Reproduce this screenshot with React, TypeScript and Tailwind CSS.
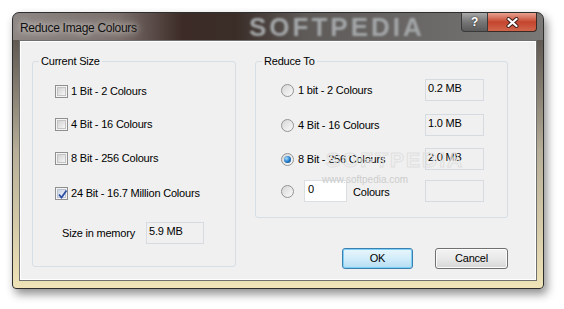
import type { ReactNode } from "react";

const sizes = [
  { label: "1 Bit - 2 Colours", checked: false, gap: "mt-0" },
  { label: "4 Bit - 16 Colours", checked: false, gap: "mt-[11px]" },
  { label: "8 Bit - 256 Colours", checked: false, gap: "mt-[12px]" },
  { label: "24 Bit - 16.7 Million Colours", checked: true, gap: "mt-[13px]" },
];

const targets = [
  { label: "1 bit - 2 Colours", size: "0.2 MB", selected: false, gap: "mt-0" },
  { label: "4 Bit - 16 Colours", size: "1.0 MB", selected: false, gap: "mt-[13px]" },
  { label: "8 Bit - 256 Colours", size: "2.0 MB", selected: true, gap: "mt-[12px]" },
];

function CheckBox({ checked }: { checked: boolean }) {
  return (
    <span className="flex h-[13px] w-[13px] shrink-0 items-center justify-center border border-[#8f8f8f] bg-[#f4f4f4]">
      <span
        className={`relative flex h-[9px] w-[9px] items-center justify-center border ${checked ? "border-[#b9c3d3] bg-gradient-to-br from-[#c9d3e3] to-[#f1f4f9]" : "border-[#c4c4c4] bg-gradient-to-br from-[#d2d2d2] to-[#f6f6f6]"}`}
      >
        {checked && (
          <svg width="11" height="11" viewBox="0 0 11 11" className="absolute -left-[1px] -top-[1px]">
            <path d="M2 5.5 L4.5 8.5 L9.5 1.5" fill="none" stroke="#2c4fa3" strokeWidth="1.8" />
          </svg>
        )}
      </span>
    </span>
  );
}

function Radio({ selected }: { selected: boolean }) {
  return (
    <span className="flex h-[13px] w-[13px] shrink-0 items-center justify-center rounded-full border border-[#939393] bg-gradient-to-br from-[#d6d6d6] to-[#fbfbfb]">
      {selected && (
        <span className="h-[7px] w-[7px] rounded-full bg-[radial-gradient(circle_at_35%_35%,#a8ddff,#1c74c4_55%,#0c3d78)]" />
      )}
    </span>
  );
}

function ReadBox({ children, width }: { children?: ReactNode; width: string }) {
  return (
    <div className={`h-[22px] ${width} border border-[#d5dbe1] bg-[#f0f0f0] pl-[2px] pt-[2px] leading-[13px]`}>
      {children}
    </div>
  );
}

function Group({ title, className, children }: { title: string; className: string; children: ReactNode }) {
  return (
    <div className={`relative rounded-[3px] border border-[#d5dfe5] ${className}`}>
      <span className="absolute -top-[7px] left-[6px] bg-[#f0f0f0] px-[2px] leading-[13px]">{title}</span>
      {children}
    </div>
  );
}

export default function App() {
  return (
    <div className="relative h-[309px] w-[564px] overflow-hidden bg-white pl-[12px] pt-[12px] font-['Liberation_Sans',Arial,sans-serif] text-[11px] tracking-[-0.2px] text-black">
      <div className="flex h-[277px] w-[532px] flex-col rounded-b-[4px] rounded-t-[7px] border border-[#2e2e2e] bg-gradient-to-b from-[#4d4643] via-[#b6ae98] to-[#efe3b7] px-[6px] pb-[7px] shadow-[3px_5px_10px_rgba(0,0,0,0.45)]">
        {/* title bar */}
        <div className="relative -mx-[6px] flex h-[27px] items-start justify-between overflow-hidden rounded-t-[6px] bg-[linear-gradient(90deg,#8d8784_0%,#7a6f6b_20%,#3c2b27_32%,#3a2d28_42%,#5e5a58_55%,#6c6a69_80%,#7a7876_100%)]">
          <span className="ml-[7px] mt-[6px] text-[12px] tracking-[-0.3px] text-[#111] [text-shadow:0_0_6px_#d8d4d0,0_0_10px_#cfcac6]">
            Reduce Image Colours
          </span>
          <span className="pointer-events-none absolute left-[236px] top-[3px] font-['Liberation_Sans',Arial,sans-serif] text-[26px] font-bold leading-[22px] tracking-[3px] text-[#a3a6a8] blur-[1.3px]">
            SOFTPEDIA
          </span>
          <div className="relative mr-[6px] flex">
            <div className="flex h-[19px] w-[27px] items-center justify-center rounded-bl-[4px] border border-t-0 border-[#3a3a3a] bg-gradient-to-b from-[#a8a8a8] via-[#767676] to-[#5a5a5a] text-[12px] font-bold text-white [text-shadow:0_0_2px_#222]">
              ?
            </div>
            <div className="flex h-[19px] w-[49px] items-center justify-center rounded-br-[4px] border border-l-0 border-t-0 border-[#3a2a26] bg-gradient-to-b from-[#e6a191] via-[#c5442d] to-[#d0654c]">
              <svg width="15" height="11" viewBox="0 0 15 11">
                <path d="M3.5 2 L11.5 9 M11.5 2 L3.5 9" stroke="#3b1d16" strokeWidth="4" strokeLinecap="round" />
                <path d="M3.5 2 L11.5 9 M11.5 2 L3.5 9" stroke="#ffffff" strokeWidth="2.2" strokeLinecap="round" />
              </svg>
            </div>
          </div>
        </div>

        {/* client area */}
        <div className="relative flex flex-1 border border-[#6f6f6f] bg-[#f0f0f0] pl-[12px] pt-[20px] shadow-[inset_0_0_0_1px_#ffffff]">
          <Group title="Current Size" className="h-[206px] w-[204px] pl-[22px] pt-[18px]">
            {sizes.map((s) => (
              <div key={s.label} className={`flex h-[22px] items-center ${s.gap}`}>
                <CheckBox checked={s.checked} />
                <span className="ml-[3px]">{s.label}</span>
              </div>
            ))}
            <div className="ml-[7px] mt-[18px] flex h-[22px] items-center">
              <span className="w-[84px]">Size in memory</span>
              <ReadBox width="w-[58px]">5.9 MB</ReadBox>
            </div>
          </Group>

          <div className="ml-[19px] flex flex-col">
            <Group title="Reduce To" className="h-[157px] w-[253px] pl-[25px] pt-[17px]">
              {targets.map((t) => (
                <div key={t.label} className={`flex h-[22px] items-center ${t.gap}`}>
                  <div className="flex w-[144px] items-center">
                    <Radio selected={t.selected} />
                    <span className="ml-[4px]">{t.label}</span>
                  </div>
                  <ReadBox width="w-[59px]">{t.size}</ReadBox>
                </div>
              ))}
              <div className="mt-[10px] flex h-[22px] items-center">
                <div className="flex w-[144px] items-center">
                  <Radio selected={false} />
                  <div className="ml-[10px] h-[22px] w-[43px] border border-[#dadfe4] bg-white pl-[3px] pt-[2px] leading-[13px]">0</div>
                  <span className="ml-[6px] mt-[3px]">Colours</span>
                </div>
                <ReadBox width="w-[59px]" />
              </div>
            </Group>

            <div className="mt-[30px] flex justify-end gap-[22px]">
              <button
                type="button"
                className="h-[21px] w-[71px] rounded-[3px] border border-[#3c7fb1] bg-gradient-to-b from-[#e8f6fd] via-[#d2edfa] to-[#b4dcf3] shadow-[inset_0_0_0_1px_#7dd0f5]"
              >
                OK
              </button>
              <button
                type="button"
                className="h-[21px] w-[73px] rounded-[3px] border border-[#707070] bg-gradient-to-b from-[#f3f3f3] via-[#e9e9e9] to-[#d6d6d6] shadow-[inset_0_0_0_1px_#fcfcfc]"
              >
                Cancel
              </button>
            </div>
          </div>

          {/* faint watermark over the dialog */}
          <span className="pointer-events-none absolute left-[306px] top-[103px] font-['Liberation_Sans',Arial,sans-serif] text-[21px] font-bold tracking-[2px] text-transparent [-webkit-text-stroke:1px_#e0e0e0]">
            SOFTPEDIA
          </span>
          <span className="pointer-events-none absolute left-[302px] top-[133px] text-[10px] leading-[11px] tracking-[0px] text-[#cdcdcd]">
            www.softpedia.com
          </span>
        </div>
      </div>
    </div>
  );
}
